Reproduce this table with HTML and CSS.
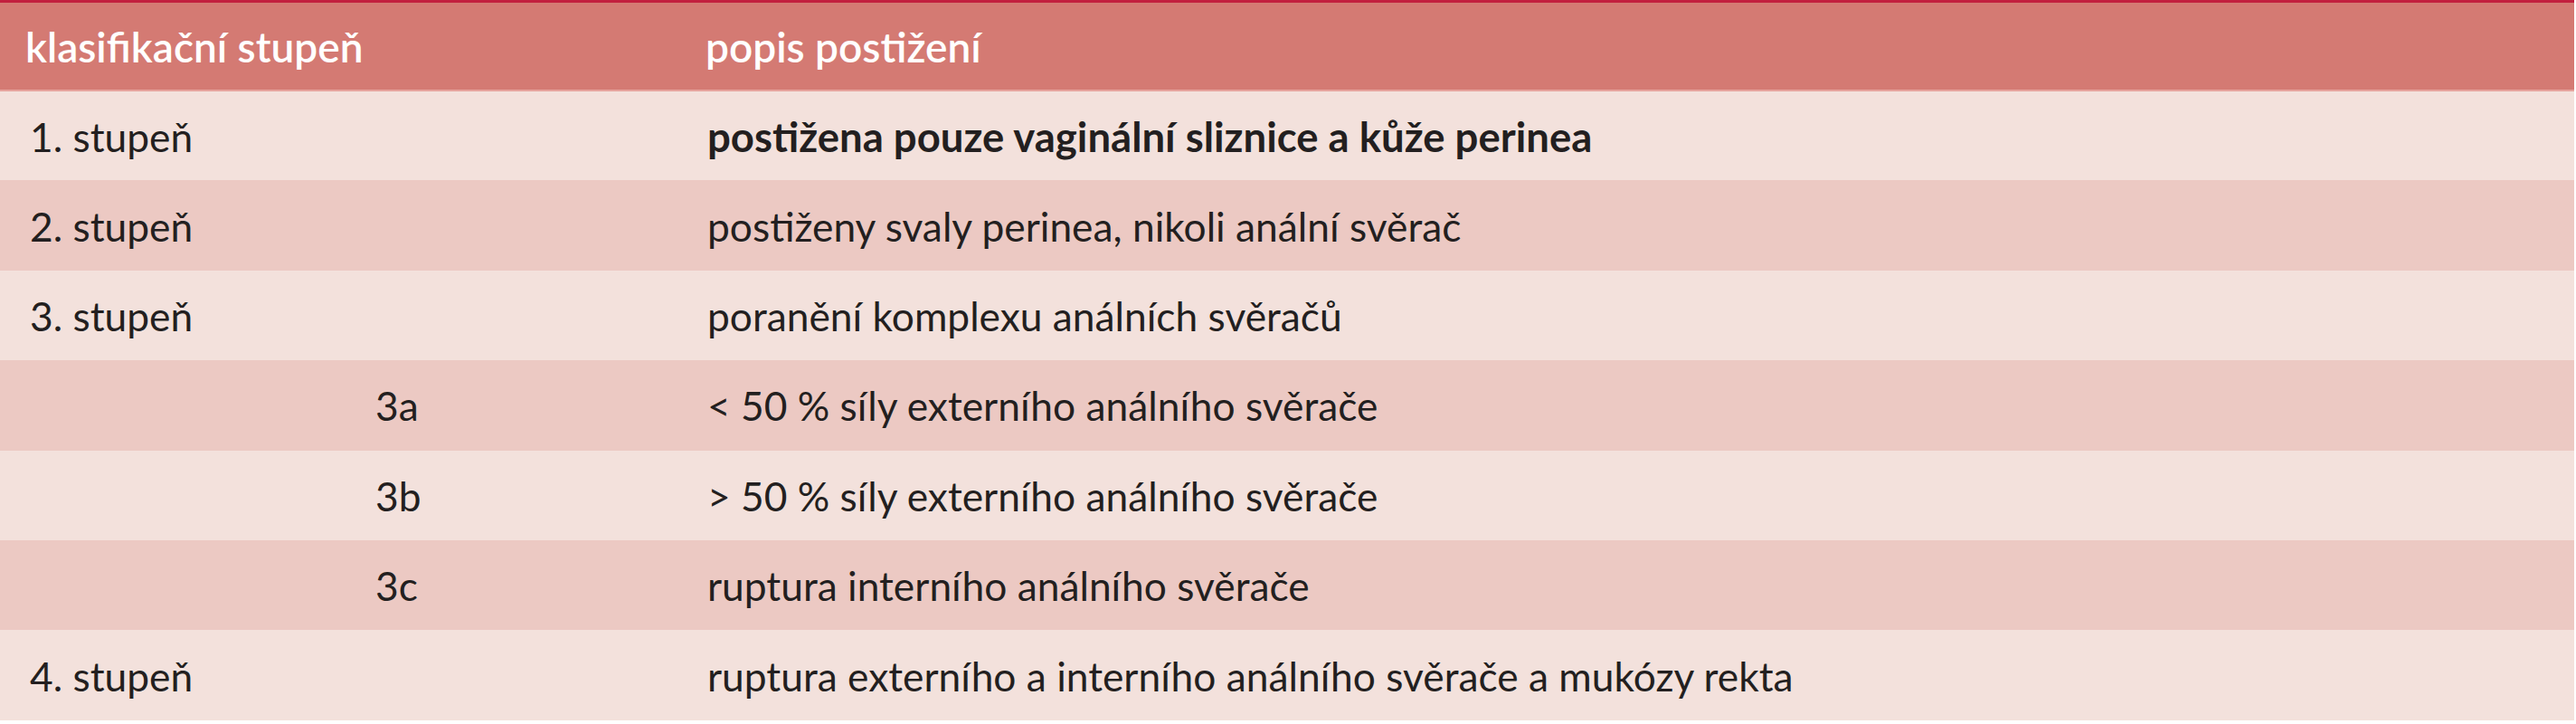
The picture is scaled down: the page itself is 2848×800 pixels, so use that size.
FILE: index.html
```html
<!DOCTYPE html>
<html lang="cs">
<head>
<meta charset="utf-8">
<title>Klasifikace poranění perinea</title>
<link rel="stylesheet" href="styles.css">
</head>
<body>
<div class="sheet">
  <table class="grade-table">
    <thead>
      <tr class="head-row">
        <th class="col-grade">klasifikační stupeň</th>
        <th class="col-sub"></th>
        <th class="col-desc">popis postižení</th>
      </tr>
    </thead>
    <tbody>
      <tr class="row light">
        <td class="col-grade">1. stupeň</td>
        <td class="col-sub"></td>
        <td class="col-desc strong">postižena pouze vaginální sliznice a kůže perinea</td>
      </tr>
      <tr class="row dark">
        <td class="col-grade">2. stupeň</td>
        <td class="col-sub"></td>
        <td class="col-desc">postiženy svaly perinea, nikoli anální svěrač</td>
      </tr>
      <tr class="row light">
        <td class="col-grade">3. stupeň</td>
        <td class="col-sub"></td>
        <td class="col-desc">poranění komplexu análních svěračů</td>
      </tr>
      <tr class="row dark">
        <td class="col-grade"></td>
        <td class="col-sub">3a</td>
        <td class="col-desc">&lt; 50 % síly externího análního svěrače</td>
      </tr>
      <tr class="row light">
        <td class="col-grade"></td>
        <td class="col-sub">3b</td>
        <td class="col-desc">&gt; 50 % síly externího análního svěrače</td>
      </tr>
      <tr class="row dark">
        <td class="col-grade"></td>
        <td class="col-sub">3c</td>
        <td class="col-desc">ruptura interního análního svěrače</td>
      </tr>
      <tr class="row light">
        <td class="col-grade">4. stupeň</td>
        <td class="col-sub"></td>
        <td class="col-desc">ruptura externího a interního análního svěrače a mukózy rekta</td>
      </tr>
    </tbody>
  </table>
</div>
</body>
</html>
```

FILE: styles.css
```css
html, body {
  margin: 0;
  padding: 0;
  background: #ffffff;
}

.sheet {
  width: 2846px;
  border-top: 3px solid #c21f3e;
}

.grade-table {
  width: 100%;
  border-collapse: collapse;
  table-layout: fixed;
  font-family: "Lato", "Open Sans", sans-serif;
  font-size: 44.3px;
  color: #231f20;
}

.grade-table th,
.grade-table td {
  box-sizing: border-box;
  padding: 0;
  text-align: left;
  vertical-align: middle;
  white-space: nowrap;
}

.col-grade { width: 382px; }
.col-sub { width: 362px; }

.head-row {
  height: 97px;
  background: #d47a73;
  border-bottom: 2px solid #e6a39d;
}

.head-row th {
  color: #ffffff;
  font-size: 46px;
  font-weight: 600;
}

.head-row th.col-grade { padding-left: 28px; }
.head-row th.col-desc { padding-left: 36px; }

.row { height: 99.4px; }
.row.light { background: #f3e1dc; }
.row.dark { background: #ecc9c3; }

.row td.col-grade { padding-left: 33px; }
.row td.col-sub { padding-left: 33px; }
.row td.col-desc { padding-left: 38px; }

.strong {
  font-size: 45.5px;
  font-weight: 700;
}
```
